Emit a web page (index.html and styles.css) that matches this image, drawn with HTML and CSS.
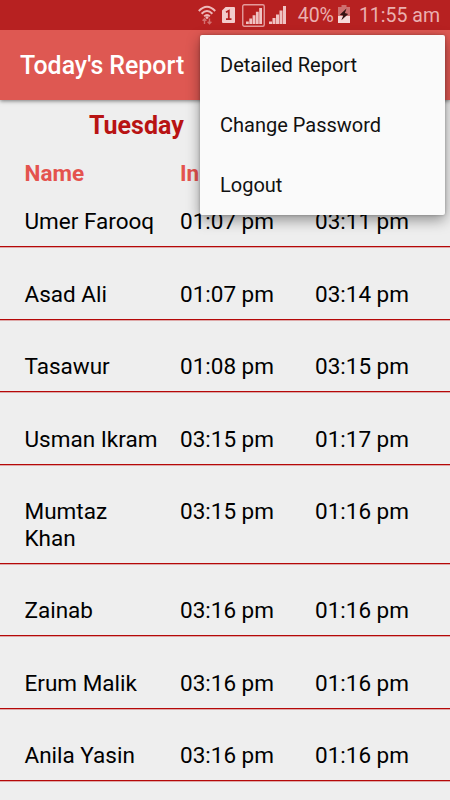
FILE: index.html
```html
<!DOCTYPE html>
<html lang="en">
<head>
    <meta charset="UTF-8">
    <meta name="viewport" content="width=device-width, initial-scale=1.0">
    <title>Today's Report</title>
    <link rel="stylesheet" href="styles.css">
</head>
<body>
    <div class="status-bar">
        <svg class="icon-wifi" width="18" height="20" viewBox="0 0 18 20" fill="none" stroke="#eeb9b9" stroke-width="2">
            <path d="M0.8 6Q9 -2.4 17.2 6M3.6 8.8Q9 3.4 14.4 8.8M6.2 11.4Q9 8.6 11.8 11.4"/>
            <circle cx="9" cy="12.6" r="1.4" fill="#eeb9b9" stroke="none"/>
            <path d="M6.5 19V14M4.6 15.8L6.5 13.8L8.4 15.8M11.5 13.5V18.5M9.6 16.8L11.5 18.8L13.4 16.8" stroke="#d3706f" stroke-width="1.4"/>
        </svg>
        <svg class="icon-sim" width="13" height="16" viewBox="0 0 13 16">
            <path d="M3.6 0H12a1 1 0 0 1 1 1V15a1 1 0 0 1-1 1H1a1 1 0 0 1-1-1V3.6Z" fill="#f3cccc"/>
            <path d="M4 5.3L6.8 3.8V12M4 12.2H9.5" fill="none" stroke="#b52222" stroke-width="1.8"/>
        </svg>
        <svg class="icon-signal-box" width="23" height="23" viewBox="0 0 23 23">
            <rect x="0.75" y="0.75" width="21.5" height="21.5" rx="1.5" fill="none" stroke="#e39c9c" stroke-width="1.4"/>
            <path d="M4 17.5H6.8V20H4ZM7.3 14.5H10.1V20H7.3ZM10.6 11.2H13.4V20H10.6ZM13.9 7.8H16.7V20H13.9ZM17.2 4H20V20H17.2Z" fill="#f0c2c2"/>
        </svg>
        <svg class="icon-signal" width="17" height="18" viewBox="0 0 17 18">
            <path d="M0 15.5H3V18H0ZM3.5 12H6.5V18H3.5ZM7 8.5H10V18H7ZM10.5 4.5H13.5V18H10.5ZM14 0H17V18H14Z" fill="#f0c2c2"/>
        </svg>
        <span class="battery-level">40%</span>
        <svg class="icon-battery" width="12" height="18" viewBox="0 0 12 18">
            <path d="M3.5 0H8.5V2H12V11H0V2H3.5Z" fill="#ce7070"/>
            <path d="M0 11H12V18H0Z" fill="#f6dada"/>
            <path d="M8.5 3.5L1.8 9.7L5.2 10.6L3.4 15.2L10.2 8.9L6.9 8Z" fill="#351313"/>
        </svg>
        <span class="clock">11:55 am</span>
    </div>

    <div class="app-bar">
        <h1>Today's Report</h1>
    </div>

    <div class="menu">
        <a class="menu-item">Detailed Report</a>
        <a class="menu-item">Change Password</a>
        <a class="menu-item">Logout</a>
    </div>

    <div class="report">
        <h2 class="day">Tuesday</h2>
        <div class="row row-header">
            <span>Name</span>
            <span>In</span>
        </div>
        <div class="row row-first">
            <span class="name">Umer Farooq</span>
            <span>01:07 pm</span>
            <span>03:11 pm</span>
        </div>
        <div class="row">
            <span class="name">Asad Ali</span>
            <span>01:07 pm</span>
            <span>03:14 pm</span>
        </div>
        <div class="row">
            <span class="name">Tasawur</span>
            <span>01:08 pm</span>
            <span>03:15 pm</span>
        </div>
        <div class="row">
            <span class="name">Usman Ikram</span>
            <span>03:15 pm</span>
            <span>01:17 pm</span>
        </div>
        <div class="row">
            <span class="name">Mumtaz Khan</span>
            <span>03:15 pm</span>
            <span>01:16 pm</span>
        </div>
        <div class="row">
            <span class="name">Zainab</span>
            <span>03:16 pm</span>
            <span>01:16 pm</span>
        </div>
        <div class="row">
            <span class="name">Erum Malik</span>
            <span>03:16 pm</span>
            <span>01:16 pm</span>
        </div>
        <div class="row">
            <span class="name">Anila Yasin</span>
            <span>03:16 pm</span>
            <span>01:16 pm</span>
        </div>
    </div>
</body>
</html>
```
FILE: styles.css
```css
* {
    margin: 0;
    padding: 0;
    box-sizing: border-box;
}

body {
    position: relative;
    height: 800px;
    overflow: hidden;
    font-family: Roboto, sans-serif;
    background: #eeeeee;
    color: #000;
}

.status-bar {
    display: flex;
    justify-content: flex-end;
    align-items: center;
    height: 30px;
    padding-right: 10px;
    background: #b72121;
    color: #eab0b0;
    font-size: 19.5px;
    line-height: 30px;
}

.battery-level,
.clock {
    padding-top: 2px;
}

.icon-wifi {
    margin: 0 6px 0 0;
}

.icon-sim {
    margin-right: 7px;
}

.icon-signal-box {
    margin-right: 4px;
}

.icon-signal {
    margin-right: 12px;
}

.battery-level {
    margin-right: 4px;
}

.icon-battery {
    margin: 0 9px 2px 0;
}

.app-bar {
    position: relative;
    display: flex;
    align-items: center;
    height: 70px;
    padding-left: 20px;
    background: #de5852;
    box-shadow: 0 1px 4px rgba(0, 0, 0, 0.5);
    clip-path: inset(0 0 -10px 0);
}

.app-bar h1 {
    padding-top: 1px;
    color: #fff;
    font-size: 24.9px;
    font-weight: 500;
}

.menu {
    position: absolute;
    top: 35px;
    left: 200px;
    z-index: 2;
    width: 245px;
    height: 180px;
    background: #fafafa;
    border-radius: 2px;
    box-shadow: 0 5px 14px rgba(0, 0, 0, 0.4), 0 0 3px rgba(0, 0, 0, 0.25);
}

.menu-item {
    display: block;
    height: 60px;
    padding-left: 20px;
    font-size: 20px;
    line-height: 61px;
    color: #111;
}

.day {
    padding: 11px 0 0 89px;
    color: #b81313;
    font-size: 25px;
    font-weight: 700;
    line-height: 30px;
}

.row {
    display: grid;
    grid-template-columns: 155.5px 135px 135px;
    padding: 33.5px 0 11.5px 24.5px;
    border-bottom: 1px solid #b50808;
    box-shadow: 0 1px 0 rgba(181, 8, 8, 0.3);
    font-size: 22.5px;
    line-height: 26.5px;
}

.name {
    padding-right: 20px;
}

.row-header {
    padding-top: 19px;
    padding-bottom: 0;
    border-bottom: none;
    box-shadow: none;
    color: #e4534e;
    font-weight: 700;
}

.row-first {
    padding-top: 21.5px;
}
```
